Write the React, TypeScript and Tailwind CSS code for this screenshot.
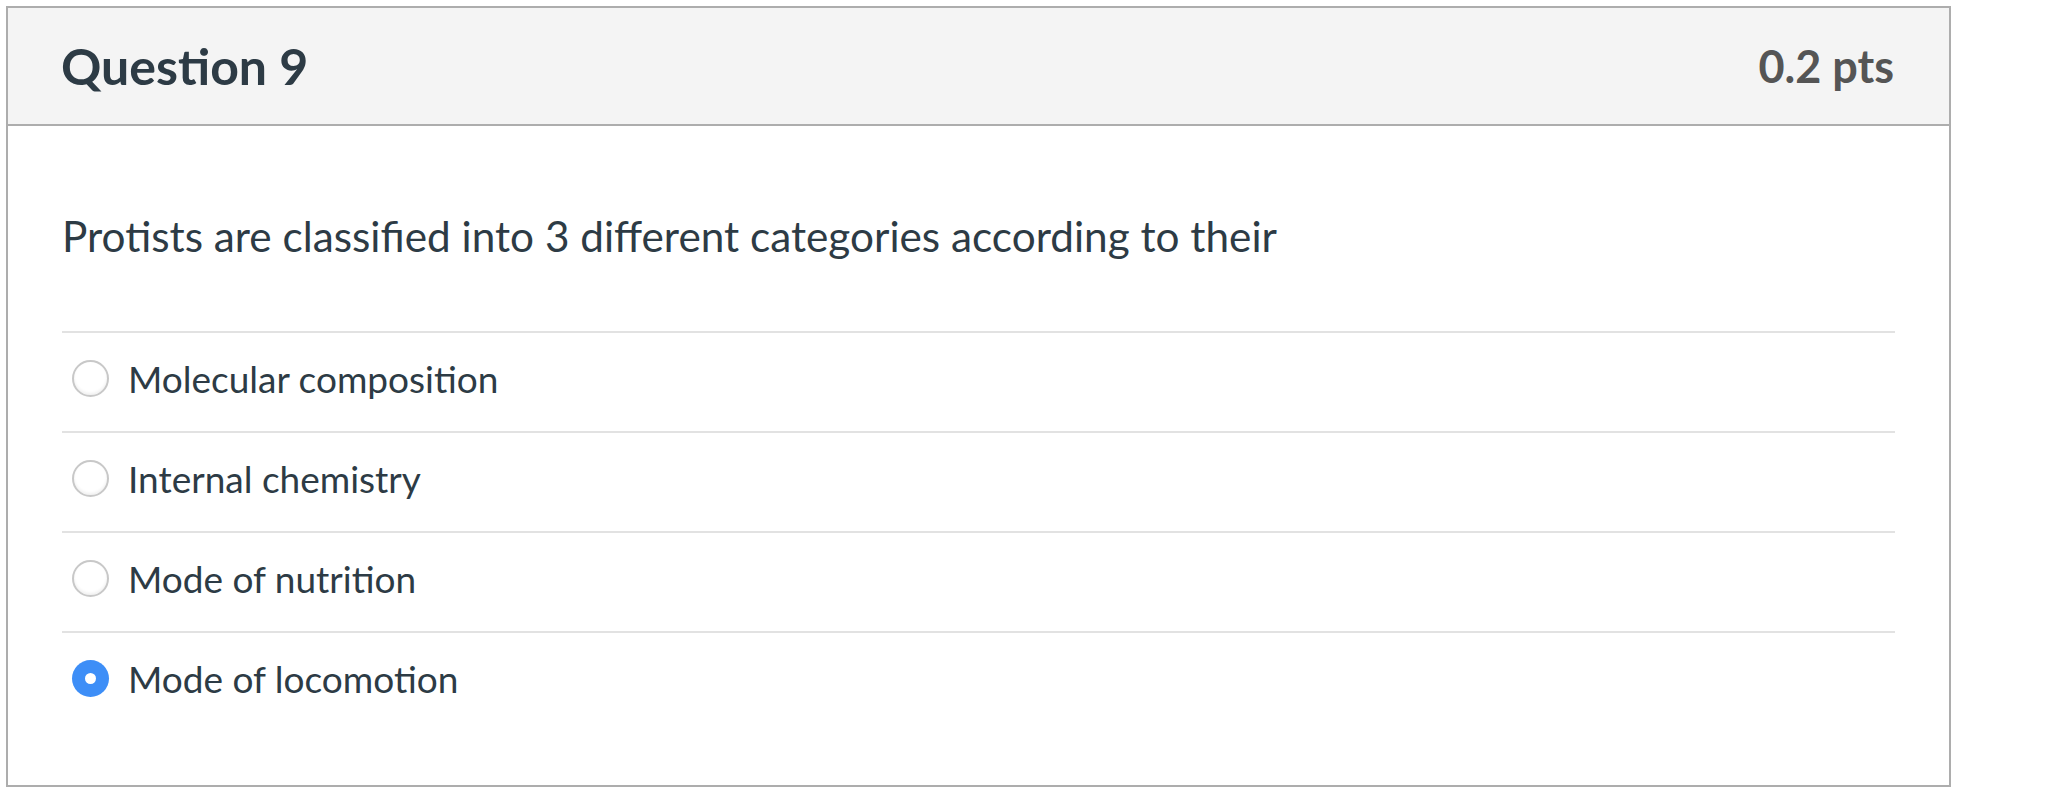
const options = [
  { label: 'Molecular composition', checked: false },
  { label: 'Internal chemistry', checked: false },
  { label: 'Mode of nutrition', checked: false },
  { label: 'Mode of locomotion', checked: true },
];

function Radio({ checked }: { checked: boolean }) {
  if (checked) {
    return (
      <span className="w-[37px] h-[37px] rounded-full bg-[#3d8ef7] flex items-center justify-center shrink-0">
        <span className="w-[11px] h-[11px] rounded-full bg-white" />
      </span>
    );
  }
  return (
    <span className="w-[37px] h-[37px] rounded-full bg-white border-2 border-[#c8c8c8] shadow-[inset_0_-2px_3px_rgba(0,0,0,0.06)] shrink-0" />
  );
}

export default function App() {
  return (
    <div className="w-[2067px] h-[787px] bg-white pl-[6px] pt-[6px] font-['Lato','Liberation_Sans',sans-serif] text-[#2d3b45]">
      <div className="w-[1945px] h-[781px] border-2 border-[#adadad] flex flex-col">
        {/* Header */}
        <div className="h-[118px] shrink-0 bg-[#f4f4f4] border-b-2 border-[#adadad] flex items-center justify-between pl-[53px] pr-[55px]">
          <h2 className="text-[50px] font-bold leading-none">Question 9</h2>
          <span className="text-[45px] font-bold leading-none text-[#555555]">0.2 pts</span>
        </div>

        {/* Body */}
        <div className="px-[54px] pt-[81px]">
          <p className="text-[42.3px] leading-[57px]">
            Protists are classified into 3 different categories according to their
          </p>
          <div className="mt-[67px]">
            {options.map((o) => (
              <label
                key={o.label}
                className="h-[100px] border-t-2 border-[#e2e2e2] flex items-center gap-[19px] pl-[10px] pb-[8px]"
              >
                <Radio checked={o.checked} />
                <span className="text-[37px] leading-none">{o.label}</span>
              </label>
            ))}
          </div>
        </div>
      </div>
    </div>
  );
}
